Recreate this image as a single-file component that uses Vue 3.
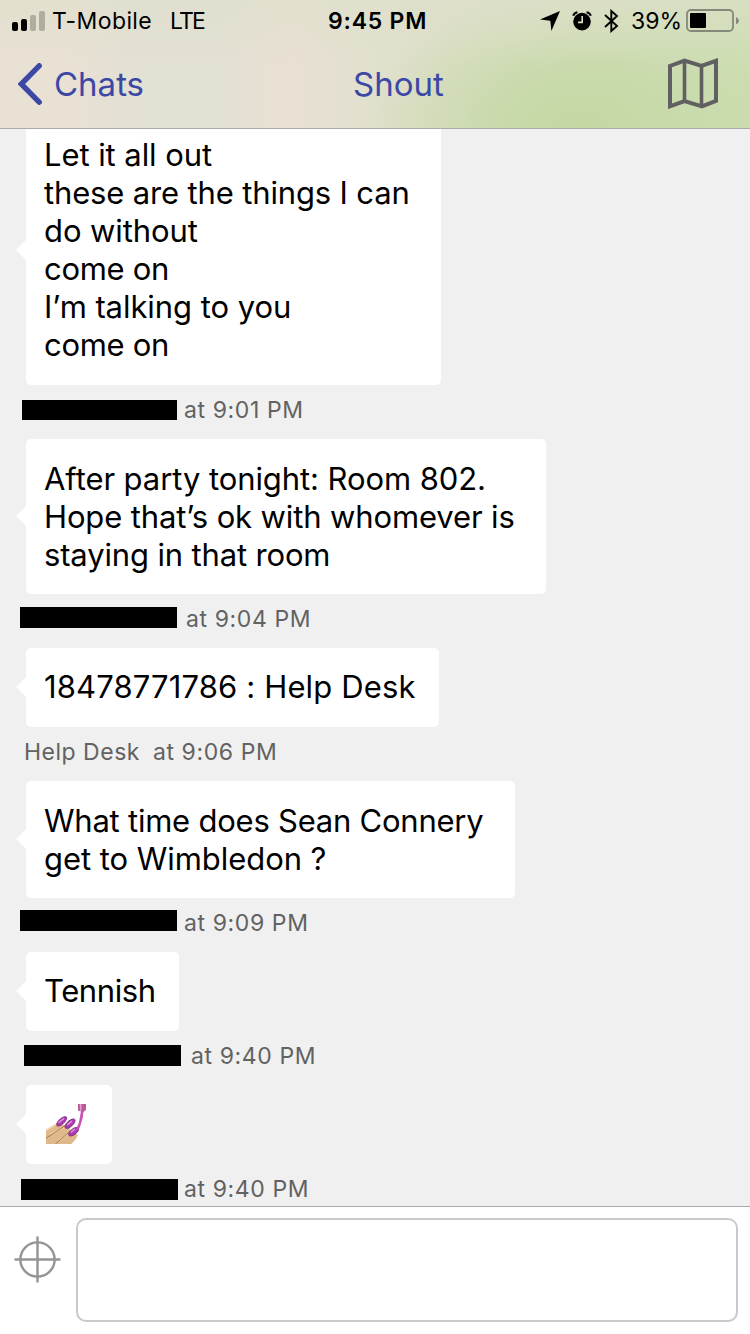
<template>
  <div class="screen">

    <header class="header">
      <!-- STATUS BAR -->
      <div class="status">
        <svg class="signal" viewBox="0 0 33 20">
          <rect x="0" y="11" width="6" height="9" rx="2" />
          <rect x="9" y="8" width="6" height="12" rx="2" />
          <rect x="18" y="4" width="6" height="16" rx="2" fill="#aeada0" />
          <rect x="27" y="0" width="6" height="20" rx="2" fill="#aeada0" />
        </svg>
        <span class="carrier">T-Mobile</span>
        <span class="network">LTE</span>
        <span class="clock">9:45 PM</span>
        <svg class="arrow" viewBox="0 0 20 20">
          <path d="M0 8.6 20 0 11.4 20 10.3 9.7z" />
        </svg>
        <svg class="alarm" viewBox="0 0 20 20">
          <circle cx="10" cy="10.6" r="8.8" />
          <path d="M1.2 4.8Q2 1.8 5.4 1.2M18.8 4.8Q18 1.8 14.6 1.2" fill="none" stroke="#000" stroke-width="2" />
          <path d="M10.2 5v6.4H6" fill="none" stroke="#dcdfc9" stroke-width="1.6" />
        </svg>
        <svg class="bluetooth" viewBox="0 0 15 24">
          <path d="M1 6 13 17 7.3 22V2L13 7 1 18" fill="none" stroke="#000" stroke-width="1.9" />
        </svg>
        <span class="percent">39%</span>
        <svg class="battery" viewBox="0 0 54 24">
          <rect x="1" y="1" width="46" height="21" rx="4" fill="none" stroke="#85897a" stroke-width="1.8" />
          <rect x="4" y="4" width="16" height="15" rx="1" />
          <path d="M50 8q6 3.700 0 7.500z" fill="#85897a" />
        </svg>
      </div>

      <!-- NAV BAR -->
      <div class="nav">
        <button class="back">
          <svg viewBox="0 0 24 42">
            <path d="M21.200 2.800 3.200 21l18 18.200" fill="none" stroke="#3c48a6" stroke-width="5.400" stroke-linecap="round" />
          </svg>
          <span>Chats</span>
        </button>
        <h1>Shout</h1>
        <svg class="map" viewBox="0 0 50 51">
          <path d="M2 8 16.500 2.600 33.500 8 48 2.800V42.800L34 48.300 16.500 43 2 48.300z" fill="none" stroke="#606062" stroke-width="4" />
          <path d="M16.500 3V43M33.500 8V48" stroke="#606062" stroke-width="3.600" />
        </svg>
      </div>
    </header>

    <!-- MESSAGES -->
    <main class="messages">
      <div v-for="(msg, index) in messages" :key="index" class="message">
        <div
          class="bubble"
          :class="{ wrapped: index > 0 && msg.lines.length > 1 }"
          :style="{ width: msg.width + 'px' }"
        >
          <p
            v-for="(line, i) in msg.lines"
            :key="i"
            :style="{ letterSpacing: line[1] + 'px' }"
          >{{ line[0] }}</p>
          <svg v-if="msg.nails" class="nails" viewBox="33 27 120 120">
            <path d="M33 105 66 84 80 88 92 91 104 97 108 111 129 120Q122 136 109 147H33z" fill="#dfb98b" />
            <path d="M36 105 68 86M45 118 94 94M70 138 106 112" stroke="#efd0a5" stroke-width="5" />
            <path d="M33 130 90 92M61 147 103 111" stroke="#a9784f" stroke-width="3" fill="none" />
            <g stroke="#7d247f" stroke-width="2.500" fill="#a93dae">
              <ellipse cx="80" cy="79" rx="19" ry="8" transform="rotate(-42 80 79)" />
              <ellipse cx="105" cy="86" rx="19" ry="8.500" transform="rotate(-42 105 86)" />
              <ellipse cx="116" cy="110" rx="18" ry="8.500" transform="rotate(-38 116 110)" />
            </g>
            <path d="M72 82 86 71M98 89 110 79M109 111 119 103" stroke="#e59ae8" stroke-width="4" stroke-linecap="round" />
            <path d="M138 47h8l-3 22-7 24q-4 13-14 14l10-25z" fill="#d04fb6" />
            <path d="M129 27h24v18l-8 5-16-3z" fill="#b95a99" />
            <path d="M137 27v20" stroke="#e4a0ca" stroke-width="5" />
          </svg>
        </div>
        <div class="meta">
          <span v-if="msg.sender" class="sender">{{ msg.sender }}</span>
          <span v-else class="redacted" :style="barStyle(msg.bar)"></span>
          <span :style="{ marginLeft: msg.gap + 'px' }">at {{ msg.time }}</span>
        </div>
      </div>
    </main>

    <!-- INPUT -->
    <footer class="composer">
      <svg class="target" viewBox="0 0 48 48" fill="none" stroke="#949596" stroke-width="2.500" stroke-linecap="round">
        <circle cx="24" cy="24" r="17.500" />
        <path d="M24 1.500v45M1.500 24h45" />
      </svg>
      <textarea v-model="draft"></textarea>
    </footer>

  </div>
</template>

<script setup>
import { ref } from 'vue'

const draft = ref('')

/* each line is [text, letter spacing], bar is [left, top, width, height] */
const messages = ref([
  {
    lines: [
      ['Let it all out', -0.07],
      ['these are the things I can', -0.15],
      ['do without', -0.1],
      ['come on', -0.3],
      ['I’m talking to you', -0.06],
      ['come on', -0.3]
    ],
    width: 415,
    bar: [22, 15, 155, 20],
    gap: 7,
    time: '9:01 PM'
  },
  {
    lines: [
      ['After party tonight: Room 802.', -0.08],
      ['Hope that’s ok with whomever is', -0.13],
      ['staying in that room', -0.15]
    ],
    width: 520,
    bar: [20, 13, 157, 21],
    gap: 9,
    time: '9:04 PM'
  },
  {
    lines: [['18478771786 : Help Desk', 0.14]],
    width: 413,
    sender: 'Help Desk',
    gap: 13,
    time: '9:06 PM'
  },
  {
    lines: [
      ['What time does Sean Connery', -0.23],
      ['get to Wimbledon ?', -0.05]
    ],
    width: 489,
    bar: [20, 12, 157, 21],
    gap: 7,
    time: '9:09 PM'
  },
  {
    lines: [['Tennish', -0.4]],
    width: 153,
    bar: [24, 14, 157, 21],
    gap: 10,
    time: '9:40 PM'
  },
  {
    lines: [],
    nails: true,
    width: 86,
    bar: [21, 15, 157, 21],
    gap: 6,
    time: '9:40 PM'
  }
])

const barStyle = ([left, top, width, height]) => ({
  marginLeft: left + 'px',
  marginTop: top + 'px',
  width: width + 'px',
  height: height + 'px'
})
</script>

<style>
body {
  margin: 0;
}
</style>

<style scoped>
.screen {
  width: 750px;
  height: 1334px;
  display: flex;
  flex-direction: column;
  overflow: hidden;
  background-color: #f0f0f0;
  font-family: Inter, "Liberation Sans", sans-serif;
  color: #000;
}

.header {
  height: 128px;
  flex-shrink: 0;
  position: relative;
  z-index: 1;
  border-bottom: 1px solid #aaaaab;
  background:
    linear-gradient(to bottom, rgba(222, 223, 203, 0.6), rgba(222, 223, 203, 0) 50%),
    radial-gradient(ellipse 220px 140px at 580px 130px, #c3d8a3 0, rgba(196, 216, 164, 0.8) 35%, rgba(200, 218, 170, 0) 100%),
    linear-gradient(to right, #e9e1d4 0, #e9e1d4 60px, #e3e0d4 140px, #e3e0d4 220px, #e9e0d3 290px, #e3e0d0 350px, #dddfc8 450px, #d3dfbc 650px, #cddeb2 750px);
}

.status {
  height: 41px;
  display: flex;
  align-items: center;
  font-size: 23px;
  white-space: nowrap;
}

.signal {
  width: 33px;
  height: 20px;
  margin-left: 12px;
}

.carrier {
  width: 110px;
  margin-left: 7px;
  letter-spacing: 0.4px;
}

.network {
  width: 158px;
  margin-left: 8px;
  letter-spacing: -1.8px;
}

.clock {
  width: 212px;
  font-weight: 600;
  letter-spacing: 0.8px;
}

.arrow {
  width: 20px;
  height: 20px;
}

.alarm {
  width: 20px;
  height: 20px;
  margin-left: 12px;
}

.bluetooth {
  width: 15px;
  height: 24px;
  margin-left: 12px;
}

.percent {
  width: 55px;
  margin-left: 12px;
}

.battery {
  width: 54px;
  height: 24px;
}

.nav {
  height: 86px;
  display: grid;
  grid-template-columns: 1fr auto 1fr;
  align-items: center;
  padding: 0 32px 0 18px;
  color: #3c48a6;
  font-size: 33px;
}

.back {
  display: flex;
  align-items: center;
  gap: 12px;
  padding: 0;
  border: none;
  background: none;
  color: inherit;
  font: inherit;
}

.back svg {
  width: 24px;
  height: 42px;
}

h1 {
  margin: 0 0 0 61px;
  font-size: 33px;
  font-weight: 400;
}

.map {
  width: 50px;
  height: 51px;
  margin-bottom: 2px;
  justify-self: end;
}

.messages {
  flex: 1;
  min-height: 0;
  overflow: hidden;
}

.message:first-child {
  margin-top: -13px;
}

.bubble {
  position: relative;
  box-sizing: border-box;
  min-height: 79px;
  margin-left: 26px;
  padding: 20px 0 21px 18px;
  border-radius: 5px;
  background-color: #fff;
  font-size: 31px;
  line-height: 38px;
  white-space: nowrap;
}

.wrapped {
  padding-top: 21px;
  padding-bottom: 20px;
}

/* little pointer on the left side */
.bubble::before {
  content: '';
  position: absolute;
  left: -10px;
  top: calc(50% - 11px);
  border: 10px solid transparent;
  border-left: none;
  border-right-color: #fff;
}

.bubble p {
  margin: 0;
}

.nails {
  display: block;
  width: 40px;
  height: 40px;
  margin: -1px 0 -1px 2px;
}

.meta {
  height: 54px;
  display: flex;
  color: #626262;
  font-size: 23px;
  line-height: 50px;
  letter-spacing: 0.6px;
  white-space: nowrap;
}

.sender {
  margin-left: 24px;
  letter-spacing: 0.5px;
}

.redacted {
  background-color: #000;
}

.composer {
  height: 127px;
  flex-shrink: 0;
  display: flex;
  align-items: flex-start;
  border-top: 1px solid #a9a9aa;
  background-color: #fff;
}

.target {
  width: 47px;
  height: 47px;
  margin: 29px 1px 0 14px;
}

textarea {
  box-sizing: border-box;
  width: 662px;
  height: 104px;
  margin: 11px 0 0 14px;
  padding: 12px;
  border: 2px solid #c8c8cd;
  border-radius: 10px;
  outline: none;
  resize: none;
  background-color: #fff;
  font: inherit;
  font-size: 31px;
}
</style>
